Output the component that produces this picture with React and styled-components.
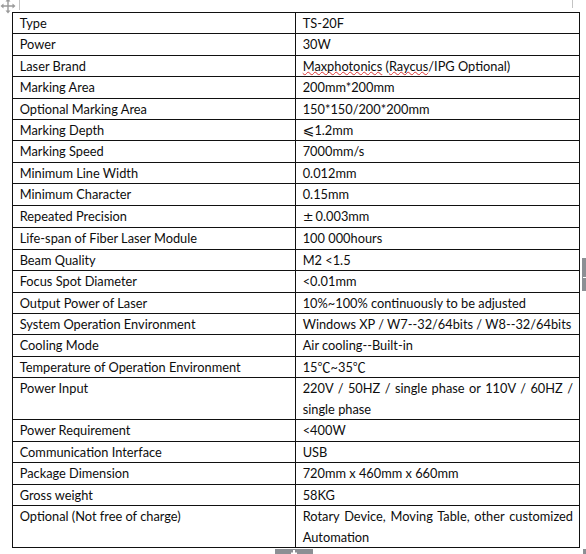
import React from 'react';
import styled, { createGlobalStyle } from 'styled-components';

const Global = createGlobalStyle`
  html, body { margin: 0; padding: 0; background: #fff; }
  body { font-family: Lato, "Noto Sans CJK SC", sans-serif; color: #0d0d0d; }
`;

const Page = styled.div`
  position: relative;
  width: 586px;
  height: 554px;
  overflow: hidden;
  box-sizing: border-box;
  padding: 11.7px 6px 0 11.7px;
  background: #fff;
`;

const Table = styled.div`
  width: 568.3px;
  border-top: 1px solid #111;
  border-left: 1px solid #111;
  box-sizing: border-box;
`;

const Row = styled.div`
  display: grid;
  grid-template-columns: 283px 1fr;
`;

const Cell = styled.div`
  border-right: 1px solid #111;
  border-bottom: 1px solid #111;
  padding: 0 5px 0 7px;
  font-size: 12.8px;
  line-height: 20.46px;
  white-space: nowrap;
`;

const Squiggle = styled.span`
  text-decoration: underline wavy #d33;
  text-decoration-thickness: 1px;
  text-decoration-skip-ink: none;
  text-underline-offset: 0px;
`;

const Sym = styled.span`
  font-family: ${(p) => (p.$cjk ? '"Noto Sans CJK SC", sans-serif' : '"DejaVu Sans", "Noto Sans CJK SC", sans-serif')};
  font-size: ${(p) => p.$size || 12}px;
  margin-right: ${(p) => p.$gap || 0}px;
`;

const JustLine = styled.div`
  text-align: justify;
  text-align-last: justify;
  white-space: normal;
  padding-right: 1px;
`;

const Mark = styled.div`
  position: absolute;
  background: ${(p) => p.$color};
  left: ${(p) => p.$x}px;
  top: ${(p) => p.$y}px;
  width: ${(p) => p.$w}px;
  height: ${(p) => p.$h}px;
`;

const Handle = styled.svg`
  position: absolute;
  left: 0;
  top: -2px;
`;

const PlusBar = styled.div`
  position: absolute;
  left: 275px;
  top: 549px;
  width: 38px;
  height: 8px;
  background: #8c8f94;
  display: flex;
  justify-content: center;
  align-items: flex-start;
`;

const rows = [
  ['Type', 'TS-20F'],
  ['Power', '30W'],
  ['Laser Brand', <><Squiggle>Maxphotonics</Squiggle> (<Squiggle>Raycus</Squiggle>/IPG Optional)</>],
  ['Marking Area', '200mm*200mm'],
  ['Optional Marking Area', '150*150/200*200mm'],
  ['Marking Depth', <><Sym $size={14}>⩽</Sym>1.2mm</>],
  ['Marking Speed', '7000mm/s'],
  ['Minimum Line Width', '0.012mm'],
  ['Minimum Character', '0.15mm'],
  ['Repeated Precision', <><Sym $size={13} $gap={2}>±</Sym>0.003mm</>],
  ['Life-span of Fiber Laser Module', '100 000hours'],
  ['Beam Quality', 'M2 <1.5'],
  ['Focus Spot Diameter', '<0.01mm'],
  ['Output Power of Laser', '10%~100% continuously to be adjusted'],
  ['System Operation Environment', 'Windows XP / W7--32/64bits / W8--32/64bits'],
  ['Cooling Mode', 'Air cooling--Built-in'],
  ['Temperature of Operation Environment', <>15<Sym $cjk $size={13}>℃</Sym>~35<Sym $cjk $size={13}>℃</Sym></>],
  ['Power Input', <><JustLine>220V / 50HZ / single phase or 110V / 60HZ /</JustLine>single phase</>],
  ['Power Requirement', '<400W'],
  ['Communication Interface', 'USB'],
  ['Package Dimension', '720mm x 460mm x 660mm'],
  ['Gross weight', '58KG'],
  ['Optional (Not free of charge)', <><JustLine>Rotary Device, Moving Table, other customized</JustLine>Automation</>],
];

export default function App() {
  return (
    <Page>
      <Global />
      <Handle width="16" height="16" viewBox="0 0 16 16">
        <g fill="none" stroke="#9a9a9a" strokeWidth="1.4">
          <path d="M8 2 V14 M2 8 H14" />
        </g>
        <g fill="#9a9a9a">
          <path d="M8 0.5 L10.5 3.5 H5.5 Z" />
          <path d="M8 15.5 L10.5 12.5 H5.5 Z" />
          <path d="M0.5 8 L3.5 5.5 V10.5 Z" />
          <path d="M15.5 8 L12.5 5.5 V10.5 Z" />
        </g>
      </Handle>
      <Mark $color="#c4c4c4" $x={19} $y={0} $w={1} $h={10} />
      <Mark $color="#c4c4c4" $x={572} $y={0} $w={1} $h={8} />
      <Mark $color="#8c8f94" $x={582} $y={258} $w={4} $h={33} />
      <Mark $color="#ffffff" $x={583} $y={277} $w={3} $h={1} />
      <Mark $color="#8c8f94" $x={583} $y={549} $w={3} $h={5} />
      <Table>
        {rows.map(([k, v], i) => (
          <Row key={i}>
            <Cell>{k}</Cell>
            <Cell>{v}</Cell>
          </Row>
        ))}
      </Table>
      <PlusBar>
        <svg width="8" height="8" viewBox="0 0 8 8">
          <path d="M4 1 V8 M1 4.5 H7" stroke="#fff" strokeWidth="2" />
        </svg>
      </PlusBar>
    </Page>
  );
}
